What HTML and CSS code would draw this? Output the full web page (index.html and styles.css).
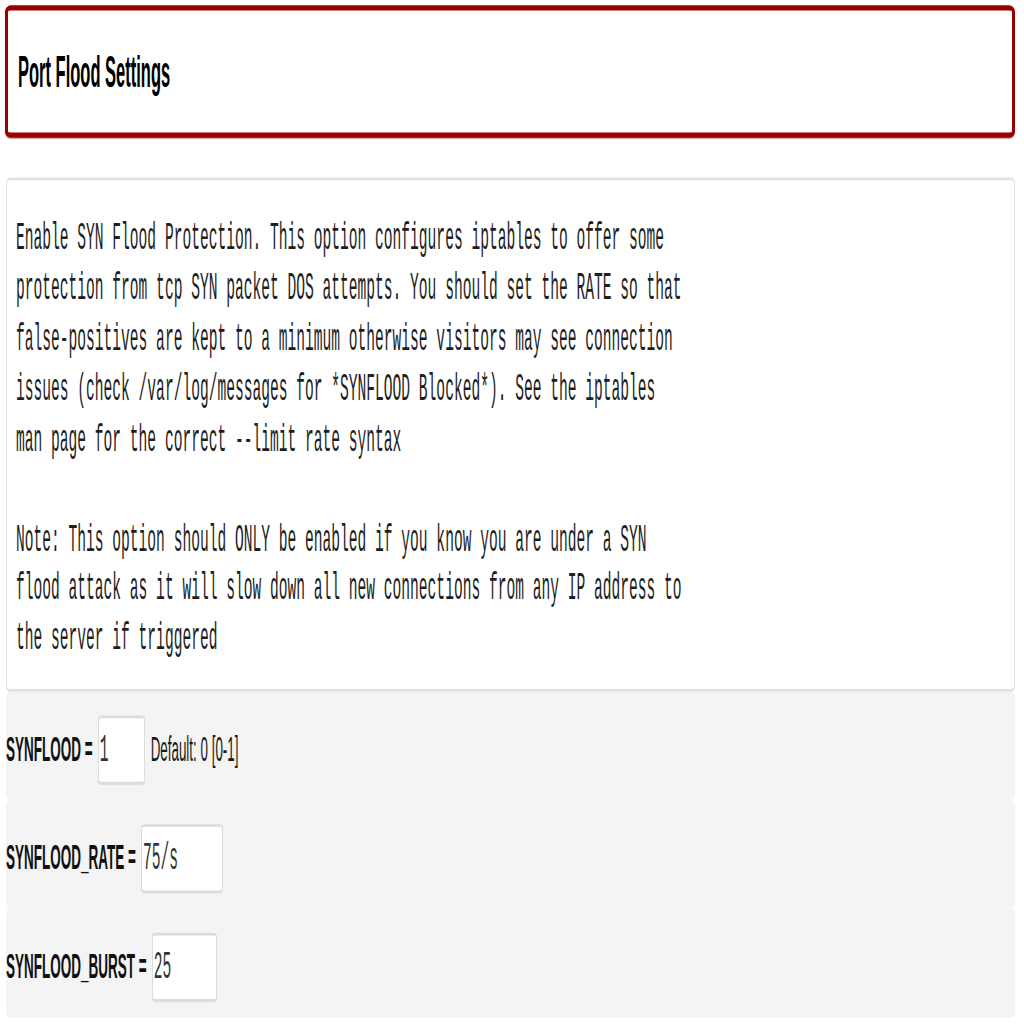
FILE: index.html
```html
<!DOCTYPE html>
<html lang="en">
<head>
<meta charset="utf-8">
<title>Port Flood Settings</title>
<link rel="stylesheet" href="styles.css">
</head>
<body>
<div class="page">
  <div class="header-box">
    <h1 class="title">Port Flood Settings</h1>
  </div>
  <div class="desc-card">
    <p class="desc">Enable SYN Flood Protection. This option configures iptables to offer some<br>protection from tcp SYN packet DOS attempts. You should set the RATE so that<br>false-positives are kept to a minimum otherwise visitors may see connection<br>issues (check /var/log/messages for *SYNFLOOD Blocked*). See the iptables<br>man page for the correct --limit rate syntax</p>
    <p class="desc">Note: This option should ONLY be enabled if you know you are under a SYN<br>flood attack as it will slow down all new connections from any IP address to<br>the server if triggered</p>
  </div>
  <div class="row">
    <span class="label">SYNFLOOD =</span>
    <input class="field w1" type="text" value="1">
    <span class="hint">Default: 0 [0-1]</span>
  </div>
  <div class="row">
    <span class="label">SYNFLOOD_RATE =</span>
    <input class="field w4" type="text" value="75/s">
  </div>
  <div class="row">
    <span class="label">SYNFLOOD_BURST =</span>
    <input class="field w2" type="text" value="25">
  </div>
</div>
</body>
</html>
```

FILE: styles.css
```css
html, body {
  margin: 0;
  padding: 0;
  background: #ffffff;
  min-height: 1024px;
  overflow: hidden;
}

.page {
  width: 1010px;
  height: 386px;
  margin-left: 5px;
  padding-top: 1.9px;
  box-sizing: border-box;
  transform: scale(1, 2.65);
  transform-origin: 0 0;
  font-family: "Liberation Sans", Arial, sans-serif;
  color: #111;
}

.header-box {
  box-sizing: border-box;
  height: 49.8px;
  border-style: solid;
  border-color: #990000;
  border-width: 2px 3px 2px 3px;
  border-radius: 6px / 2.4px;
  padding: 12.85px 10px 0 10px;
  box-shadow: 0 0.3px 0.6px rgba(120, 0, 0, 0.35);
  background: #fff;
}

.title {
  margin: 0;
  font-size: 16.5px;
  line-height: 20px;
  font-weight: bold;
  color: #000;
}

.desc-card {
  box-sizing: border-box;
  margin: 15.5px 0 0 1px;
  width: 1009px;
  height: 193.9px;
  border: 1px solid #e2e2e2;
  border-radius: 5px / 1.9px;
  padding: 13.2px 9px 0 9px;
  background: #fff;
  box-shadow: 0 0.4px 0.4px rgba(0, 0, 0, 0.08);
}

.desc {
  margin: 0 0 18.87px 0;
  font-family: "Liberation Mono", "Courier New", monospace;
  font-size: 14.6px;
  line-height: 18.87px;
  color: #1e1e1e;
}

.desc:last-child {
  margin-bottom: 0;
}

.row {
  box-sizing: border-box;
  margin-left: 1px;
  width: 1009px;
  height: 41.1px;
  padding: 8.6px 0 5.9px 0;
  display: flex;
  align-items: center;
  gap: 5px;
  background: #f4f4f4;
  border-radius: 5px / 1.9px;
}

.label {
  font-size: 13.5px;
  line-height: 16px;
  font-weight: bold;
  color: #111;
  white-space: nowrap;
}

.hint {
  margin-left: 1px;
  font-size: 13.4px;
  line-height: 16px;
  color: #1a1a1a;
}

.field {
  box-sizing: border-box;
  height: 26.6px;
  margin: 0;
  padding: 0 1px;
  border: 1px solid #dcdcdc;
  border-radius: 4px / 1.5px;
  background: #fff;
  font-family: "Liberation Mono", "Courier New", monospace;
  font-size: 14.6px;
  color: #333;
  outline: none;
  box-shadow: 0 0.3px 0.4px rgba(0, 0, 0, 0.06);
}

.w1 { width: 47px; }
.w2 { width: 65px; }
.w4 { width: 82px; }
```
